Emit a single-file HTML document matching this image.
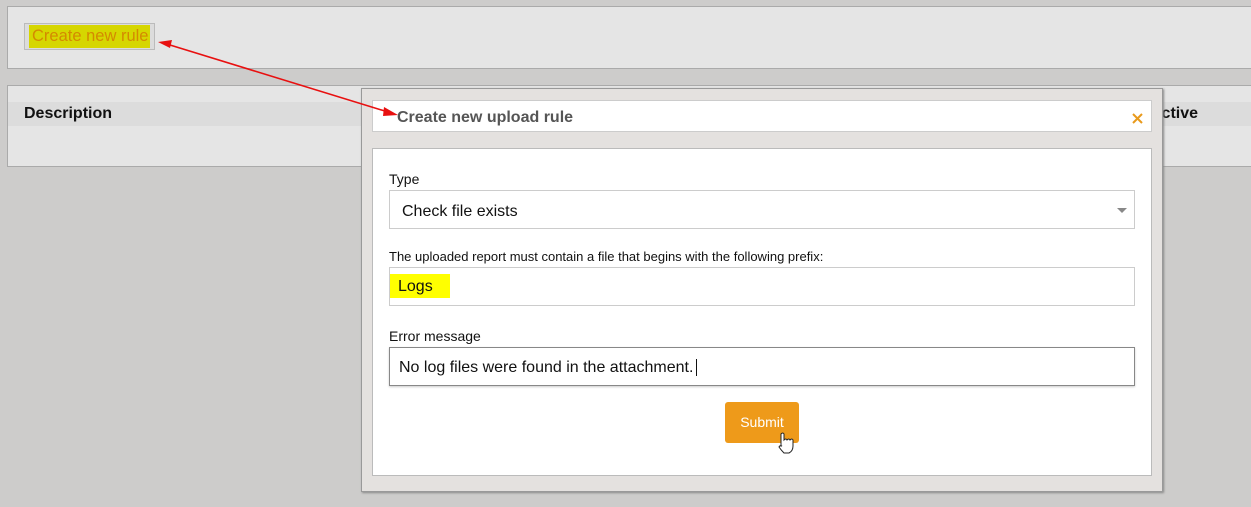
<!DOCTYPE html>
<html><head><style>
body{margin:0;width:1251px;height:507px;background:#cdcccb;font-family:"Liberation Sans",sans-serif;position:relative;overflow:hidden}
.a{position:absolute;box-sizing:border-box}
</style></head><body>
<div class="a" style="left:7px;top:6px;width:1260px;height:63px;background:#e5e5e5;border:1px solid #aaa"></div>
<div class="a" style="left:24px;top:23px;width:131px;height:27px;border:1px solid #bbb;background:#dcdcdc"></div>
<div class="a" style="left:29px;top:25px;width:121px;height:23px;background:#d6d600;color:#d48a00;font-size:16.5px;line-height:23px;padding-left:3px;white-space:nowrap">Create new rule</div>
<div class="a" style="left:7px;top:85px;width:1260px;height:82px;background:#e5e5e5;border:1px solid #aaa"></div>
<div class="a" style="left:8px;top:102px;width:1250px;height:24px;background:#dcdcdc"></div>
<div class="a" style="left:24px;top:105px;font-weight:bold;font-size:16px;color:#111">Description</div>
<div class="a" style="left:1150px;top:105px;font-weight:bold;font-size:16px;color:#111">Active</div>
<div class="a" style="left:361px;top:88px;width:802px;height:404px;background:#e4e1df;border:1px solid #999;box-shadow:1px 1px 2px #888"></div>
<div class="a" style="left:372px;top:100px;width:780px;height:32px;background:#fff;border:1px solid #ccc"></div>
<div class="a" style="left:397px;top:109px;font-weight:bold;font-size:16px;color:#555">Create new upload rule</div>
<svg class="a" style="left:1132px;top:113px" width="11" height="11"><path d="M1 1L10 10M10 1L1 10" stroke="#e89a1c" stroke-width="2"/></svg>
<div class="a" style="left:372px;top:148px;width:780px;height:328px;background:#fff;border:1px solid #bbb"></div>
<div class="a" style="left:389px;top:171px;font-size:14px;color:#111">Type</div>
<div class="a" style="left:389px;top:190px;width:746px;height:39px;border:1px solid #ccc;font-size:16px;line-height:41px;padding-left:12px;color:#111">Check file exists</div>
<div class="a" style="left:1117px;top:208px;width:0;height:0;border-left:5px solid transparent;border-right:5px solid transparent;border-top:5px solid #888"></div>
<div class="a" style="left:389px;top:249px;font-size:13px;color:#111">The uploaded report must contain a file that begins with the following prefix:</div>
<div class="a" style="left:389px;top:267px;width:746px;height:39px;border:1px solid #ccc"></div>
<div class="a" style="left:390px;top:274px;width:60px;height:24px;background:#ffff00;font-size:16px;line-height:26px;padding-left:8px;color:#111">Logs</div>
<div class="a" style="left:389px;top:328px;font-size:14px;color:#111">Error message</div>
<div class="a" style="left:389px;top:347px;width:746px;height:39px;border:1px solid #888;font-size:16px;line-height:39px;padding-left:9px;color:#111;box-shadow:0 1px 2px #ccc">No log files were found in the attachment. <span style="border-left:1px solid #111;margin-left:3px"></span></div>
<div class="a" style="left:725px;top:402px;width:74px;height:41px;background:#ee9a1a;border-radius:3px;color:#fff;font-size:14px;line-height:41px;text-align:center">Submit</div>
<svg class="a" style="left:0;top:0" width="1251" height="507"><line x1="170" y1="45" x2="388" y2="112" stroke="#e81010" stroke-width="1.6"/><polygon points="158,42 172,40 170,48" fill="#e81010"/><polygon points="398,115 384,107 383,116" fill="#e81010"/>
<path d="M781 446 l0-12 q2-2 3 0 l0 6 q2-2 3 0 q2-2 3 0 q2-2 3 0 l0 6 q0 5-4 7 l-5 0 q-3-3-5-6 q1-2 3-1z" fill="#fff" stroke="#222" stroke-width="1"/></svg>
</body></html>
